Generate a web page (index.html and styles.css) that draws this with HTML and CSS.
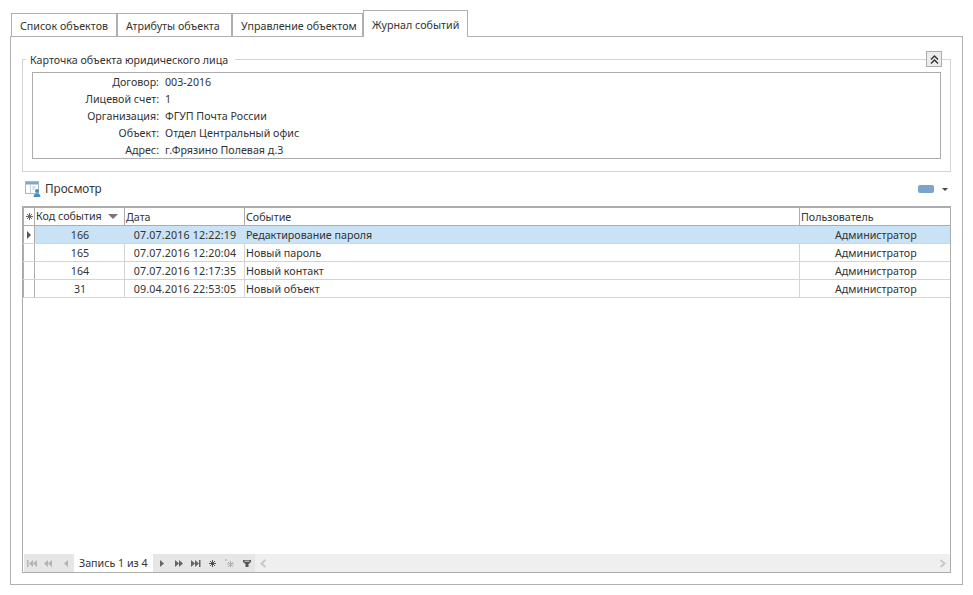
FILE: index.html
```html
<!DOCTYPE html>
<html>
	<head>
		<meta charset="utf-8">
		<title>Журнал событий</title>
		<link rel="stylesheet" href="styles.css">
	</head>
	<body>
<div class="tabs">
	<div class="tab tab1">Список объектов</div>
	<div class="tab tab2">Атрибуты объекта</div>
	<div class="tab tab3">Управление объектом</div>
	<div class="tab active">Журнал событий</div>
</div>

<div class="panel">
	<fieldset class="card">
		<legend>Карточка объекта юридического лица</legend>
		<button class="collapse">
			<svg width="9" height="9" viewBox="0 0 9 9"><path d="M1 4.500 4.500 1 8 4.500M1 8.500 4.500 5 8 8.500" fill="none" stroke="#333" stroke-width="1.400"/></svg>
		</button>
		<div class="info">
			<div class="label">Договор:</div><div>003-2016</div>
			<div class="label">Лицевой счет:</div><div>1</div>
			<div class="label">Организация:</div><div>ФГУП Почта России</div>
			<div class="label">Объект:</div><div>Отдел Центральный офис</div>
			<div class="label">Адрес:</div><div>г.Фрязино Полевая д.3</div>
		</div>
	</fieldset>

	<div class="toolbar">
		<svg class="view-icon" width="16" height="16" viewBox="0 0 16 16">
			<rect x="0.500" y="0.500" width="13" height="12" fill="#fff" stroke="#a9b9c6"/>
			<rect x="1" y="1" width="12" height="2.500" fill="#7fa8ca"/>
			<path d="M5.500 3.500V12.500" stroke="#c6d2dc"/>
			<path d="M7.500 6h3M7.500 8h2" stroke="#9dbdd6"/>
			<circle cx="12" cy="10" r="2" fill="#4a8cc4"/>
			<path d="M8.500 16c0-2.500 1.500-3.500 3.500-3.500s3.500 1 3.500 3.500z" fill="#4a8cc4"/>
		</svg>
		<span class="view-title">Просмотр</span>
		<span class="spacer"></span>
		<span class="pill"></span>
		<span class="drop"></span>
	</div>

	<div class="grid">
		<div class="row head">
			<div class="cell ind">
				<svg width="7" height="7" viewBox="0 0 7 7"><path d="M3.500 0V7M0 3.500H7M1 1 6 6M6 1 1 6" stroke="#666"/></svg>
			</div>
			<div class="cell code-head">Код события<span class="sort"></span></div>
			<div class="cell">Дата</div>
			<div class="cell">Событие</div>
			<div class="cell">Пользователь</div>
		</div>
		<div class="row selected">
			<div class="cell ind"><span class="pointer"></span></div>
			<div class="cell center">166</div>
			<div class="cell center date">07.07.2016 12:22:19</div>
			<div class="cell">Редактирование пароля</div>
			<div class="cell user">Администратор</div>
		</div>
		<div class="row">
			<div class="cell ind"></div>
			<div class="cell center">165</div>
			<div class="cell center date">07.07.2016 12:20:04</div>
			<div class="cell">Новый пароль</div>
			<div class="cell user">Администратор</div>
		</div>
		<div class="row">
			<div class="cell ind"></div>
			<div class="cell center">164</div>
			<div class="cell center date">07.07.2016 12:17:35</div>
			<div class="cell">Новый контакт</div>
			<div class="cell user">Администратор</div>
		</div>
		<div class="row">
			<div class="cell ind"></div>
			<div class="cell center">31</div>
			<div class="cell center date">09.04.2016 22:53:05</div>
			<div class="cell">Новый объект</div>
			<div class="cell user">Администратор</div>
		</div>
		<div class="empty"></div>
		<div class="nav">
			<svg class="nav-left" width="47" height="9" viewBox="0 0 47 9" fill="#b4b4b4">
				<path d="M0 1h1.500v7H0zM6 1v7L2 4.500zM10 1v7L6 4.500z"/>
				<path d="M21 1v7l-4-3.500zM25 1v7l-4-3.500z"/>
				<path d="M41 1v7l-4-3.500z"/>
			</svg>
			<div class="record">Запись 1 из 4</div>
			<svg class="nav-right" width="92" height="9" viewBox="0 0 92 9">
				<g fill="#666">
					<path d="M0 1v7l4-3.500z"/>
					<path d="M15 1v7l4-3.500zM19 1v7l4-3.500z"/>
					<path d="M31 1v7l4-3.500zM35 1v7l4-3.500zM39 1h1.500v7H39z"/>
				</g>
				<path d="M52.500 1v7M49 4.500h7M50 2l5 5M55 2l-5 5" stroke="#555"/>
				<path d="M70.500 2v6M67 5h7M68 3l5 5M73 3l-5 5" stroke="#b0b0b0"/>
				<path d="M66 0v2" stroke="#c99"/>
				<path d="M83 1h8v2L88.500 5v3h-3V5L83 3z" fill="#555"/>
				<path d="M84.500 2.200h5" stroke="#ddd"/>
			</svg>
			<div class="scroller">
				<svg width="7" height="9" viewBox="0 0 7 9"><path d="M5.500 1 1.500 4.500 5.500 8" fill="none" stroke="#c8c8c8" stroke-width="2"/></svg>
				<span class="spacer"></span>
				<svg width="7" height="9" viewBox="0 0 7 9"><path d="M1.500 1 5.500 4.500 1.500 8" fill="none" stroke="#c8c8c8" stroke-width="2"/></svg>
			</div>
		</div>
	</div>
</div>
	</body>
</html>
```

FILE: styles.css
```css
BODY {
	margin: 0;
	background: #fff;
	color: #333;
	font: 10.7px/1 "Noto Sans", sans-serif;
	padding: 10px 10px 0;
	width: 953px;
	box-sizing: content-box;
	}
.tabs {
	display: flex;
	height: 26px;
	align-items: flex-end;
	padding-left: 1px;
	position: relative;
	z-index: 1;
	}
.tab {
	border: 1px solid #b0b0b0;
	border-bottom: 0;
	background: #fff;
	height: 23px;
	line-height: 25px;
	box-sizing: border-box;
	padding-left: 8px;
	white-space: nowrap;
	}
.tab1 { width: 106px; }
.tab2 { width: 115px; }
.tab3 { width: 131px; }
.tab.active {
	width: 105px;
	height: 27px;
	line-height: 29px;
	margin-bottom: -1px;
	}
.panel {
	border: 1px solid #b0b0b0;
	height: 549px;
	box-sizing: border-box;
	padding: 0 11px;
	}

/* carte */
.card {
	border: 1px solid #d4d4d4;
	margin: 15px 0 0;
	padding: 0 9px 12px;
	height: 120px;
	box-sizing: border-box;
	position: relative;
	}
.card legend {
	margin-left: -6px;
	padding: 2px 7px 0 4px;
	line-height: 13px;
	}
.collapse {
	position: absolute;
	right: 8px;
	top: -16px;
	width: 16px;
	height: 16px;
	padding: 0;
	border: 1px solid #acacac;
	background: #ececec;
	display: flex;
	align-items: center;
	justify-content: center;
	}
.info {
	border: 1px solid #acacac;
	height: 87px;
	box-sizing: border-box;
	margin-top: 5px;
	padding-top: 1px;
	display: grid;
	grid-template-columns: 126px 1fr;
	grid-auto-rows: 17px;
	column-gap: 6px;
	line-height: 17px;
	}
.label { text-align: right; }

/* toolbar */
.toolbar {
	display: flex;
	align-items: center;
	height: 34px;
	padding-left: 3px;
	}
.view-title { margin-left: 4px; font-size: 11.7px; }
.spacer { flex: 1; }
.pill {
	width: 16px;
	height: 8px;
	background: #7ba4cb;
	border-radius: 2px;
	}
.drop {
	margin: 0 3px 0 8px;
	border: 3px solid transparent;
	border-top-color: #444;
	border-bottom: 0;
	}

/* grille */
.grid {
	border: 1px solid #acacac;
	height: 367px;
	box-sizing: border-box;
	display: flex;
	flex-direction: column;
	}
.row {
	display: grid;
	grid-template-columns: 12px 90px 120px 555px 149px;
	height: 18px;
	border-bottom: 1px solid #d4d4d4;
	box-sizing: border-box;
	line-height: 19px;
	}
.row.head {
	height: 19px;
	border-top: 1px solid #acacac;
	border-bottom: 1px solid #acacac;
	}
.cell {
	border-right: 1px solid #d4d4d4;
	padding-left: 1px;
	white-space: nowrap;
	overflow: hidden;
	}
.head .cell { border-right-color: #acacac; }
.cell:last-child { border-right: 0; }
.cell.ind {
	padding: 0;
	border-left: 1px solid #acacac;
	border-right-color: #acacac;
	display: flex;
	align-items: center;
	justify-content: center;
	}
.center { text-align: center; }
.date { letter-spacing: 0.15px; }
.user { padding-left: 35px; }
.selected { background: #c9e2f5; }
.selected .cell { border-right-color: #c9e2f5; }
.selected .cell.ind { background: #fff; border-right-color: #acacac; }
.pointer {
	border: 4px solid transparent;
	border-left: 4px solid #555;
	border-right: 0;
	}
.code-head { display: flex; align-items: center; }
.sort {
	margin-left: 6px;
	border: 5px solid transparent;
	border-top-color: #777;
	border-bottom: 0;
	}
.empty { flex: 1; }

/* navigateur */
.nav {
	height: 18px;
	background: #e6e6e6;
	display: flex;
	align-items: center;
	margin-left: 1px;
	}
.nav-left { margin-left: 3px; }
.record {
	background: #fff;
	height: 18px;
	line-height: 18px;
	width: 79px;
	padding-left: 5px;
	box-sizing: border-box;
	white-space: nowrap;
	}
.nav-right { margin-left: 7px; }
.scroller {
	flex: 1;
	align-self: stretch;
	margin-left: 3px;
	padding: 0 4px 0 5px;
	background: #efefef;
	display: flex;
	align-items: center;
	}
```
